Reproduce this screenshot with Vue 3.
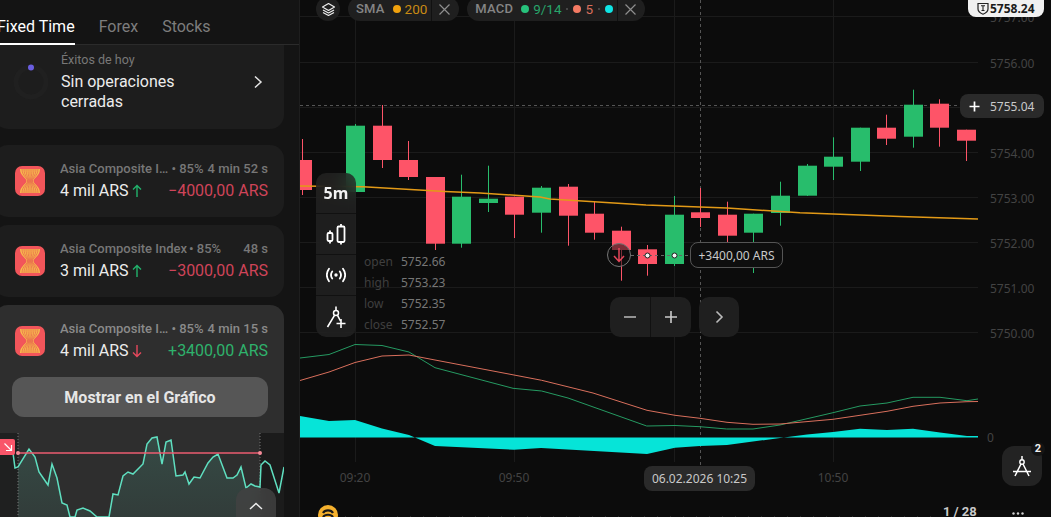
<script setup>
const tabs = ['Fixed Time', 'Forex', 'Stocks']

const trades = [
  { id: 1, amount: '4 mil ARS', dir: 'up', time: '4 min 52 s', result: '−4000,00 ARS', win: false, active: false },
  { id: 2, amount: '3 mil ARS', dir: 'up', time: '48 s', result: '−3000,00 ARS', win: false, active: false },
  { id: 3, amount: '4 mil ARS', dir: 'down', time: '4 min 15 s', result: '+3400,00 ARS', win: true, active: true }
]

const logoCurves = [-8, -6, -4, -2, 0, 2, 4, 6, 8].map((o) => {
  const top = 15 + o
  const mid = 15 + o * 0.3
  return `M${top} 3 C${top} 10 ${mid} 12 ${mid} 15 C${mid} 18 ${top} 20 ${top} 27`
})

// x, wickTop, wickBottom, bodyTop, bodyBottom, green?
const raw = [
  [302.5, 139, 195, 160, 190, 0], [355.5, 124, 192, 125.7, 192, 1], [382.5, 105, 168, 125.7, 160, 0],
  [408.5, 141, 180, 160, 177, 0], [435.5, 177, 250, 177, 243.7, 0], [461.5, 174.7, 247.7, 196.7, 243.7, 1],
  [488.5, 165.7, 212, 198.7, 203, 1], [514.5, 196.7, 238, 196.7, 214.7, 0], [541.5, 186, 232.7, 187.7, 212.7, 1],
  [568.5, 184, 245.7, 186.7, 215.7, 0], [594.5, 201, 239.7, 213.7, 232.7, 0], [621.5, 226.7, 280.7, 230.7, 250, 0],
  [647.5, 245, 275.7, 249.3, 264, 0], [674.5, 196, 266, 214.7, 264, 1], [700.5, 188, 227, 212.3, 218, 0],
  [727.5, 201.7, 245, 214.7, 235.7, 0], [753.5, 213.7, 273, 213.7, 232.7, 1], [780.5, 181.7, 225.7, 195.7, 213, 1],
  [807.5, 164, 196, 165.7, 195.7, 1], [833.5, 137.3, 180, 156.7, 166.7, 1], [860.5, 127.7, 171, 127.7, 161.7, 1],
  [886.5, 114.7, 145, 127.7, 138.7, 0], [913.5, 89.7, 147.7, 104.7, 136.7, 1], [939.5, 99.3, 146.7, 103.7, 127.7, 0],
  [966.5, 129.7, 161, 129.7, 140.7, 0]
]
const candles = raw.map(([x, wt, wb, bt, bb, g]) => ({ x, wt, wb, bt, h: bb - bt, color: g ? '#28bd6c' : '#fe5468' }))

const gridY = [16, 62, 107, 152, 197, 242, 287, 332]
const gridX = [355, 514, 674, 833]
const prices = [
  ['5757.00', 22], ['5756.00', 68], ['5754.00', 158], ['5753.00', 203],
  ['5752.00', 248], ['5751.00', 293], ['5750.00', 338]
]
const times = [['09:20', 355], ['09:50', 514], ['10:50', 833]]

const sma = '300,186 363,186.7 445,191.6 480,193 540,197 550,199 646,205 727,208 800,212.7 900,216.5 978,219'
const macdGreen = '300,358 329,354.5 355,344.5 382,345.5 409,352 435,367.7 513,388.3 541.7,391 568,398 646.7,426 675,425.5 700,426.7 726.7,429 753,429 780,425 833,412.7 860,406 887,403 913,397.3 940,397.3 967,400.7 978,399'
const macdRed = '300,380.5 329,372 355,362.5 382,356 409,355 435,360 514,375 541.7,380.3 593,393 647,410.3 675,415.3 700,418.3 727,422.3 753,424.3 780,424 833,419.3 860,415.3 887,411.3 913,406.3 940,403 967,401.7 978,401.5'
const histogram = '300,416 329,421 355,420 382,428.5 409,435 435,446 514,449.7 541,448 594,451 647,454 675,447.7 700,446 727,445 780,438 807,434.5 833,432 860,428.7 887,430 913,428.7 940,432.5 967,436 978,436 978,437.5 300,437.5'

const ohlc = [['open', '5752.66'], ['high', '5753.23'], ['low', '5752.35'], ['close', '5752.57']]

const spark = '0,452 13,453 15,468 18,467 29,449 35,457 39,472 48,485 52,464 57,478 62,503 67,505 70,517 75,517 77,510 83,508 90,511 97,517 109,517 113,494 118,495 123,476 128,472 133,474 143,464 147,444 152,438 157,437 162,464 166,442 171,440 176,476 183,475 185,472 189,484 194,477 200,478 208,463 213,457 218,454 227,478 233,478 237,475 241,467 246,488 251,484 255,486 260,487 261,465 265,461 270,465 279,493 284,467'
const sparkArea = '18,467 29,449 35,457 39,472 48,485 52,464 57,478 62,503 67,505 70,517 75,517 77,510 83,508 90,511 97,517 109,517 113,494 118,495 123,476 128,472 133,474 143,464 147,444 152,438 157,437 162,464 166,442 171,440 176,476 183,475 185,472 189,484 194,477 200,478 208,463 213,457 218,454 227,478 233,478 237,475 241,467 246,488 251,484 255,486 260,487 260,517 18,517'
</script>

<template>
  <div class="app">
    <aside class="sidebar">
      <nav class="tabs">
        <span v-for="(t, i) in tabs" :key="t" class="tab" :class="{ on: i === 0 }">{{ t }}</span>
      </nav>
      <div class="list">
        <div class="card summary">
          <svg class="ring" width="36" height="36" viewBox="0 0 36 36">
            <circle cx="18" cy="18" r="15" fill="none" stroke="#202020" stroke-width="5" />
            <circle cx="18" cy="3.5" r="3" fill="#6a5ee0" />
          </svg>
          <div class="summary-text">
            <div class="summary-label">Éxitos de hoy</div>
            <div class="summary-value">Sin operaciones<br />cerradas</div>
          </div>
          <svg class="chev" width="10" height="14" viewBox="0 0 10 14">
            <path d="M2 1.5 L8 7 L2 12.5" fill="none" stroke="#e6e6e6" stroke-width="1.5" />
          </svg>
        </div>

        <div v-for="t in trades" :key="t.id" class="card trade" :class="{ active: t.active }">
          <div class="trade-row">
            <svg class="logo" width="30" height="30" viewBox="0 0 30 30">
              <rect width="30" height="30" rx="7" fill="#f2555a" />
              <path d="M5 3 H25 C25 10 18.5 12 18.5 15 C18.5 18 25 20 25 27 H5 C5 20 11.5 18 11.5 15 C11.5 12 5 10 5 3 Z" fill="#f8bd4e" />
              <path v-for="(d, i) in logoCurves" :key="i" :d="d" fill="none" stroke="#e8694c" stroke-width=".8" />
            </svg>
            <div class="trade-body">
              <div class="trade-top">
                <span class="asset">Asia Composite Index</span>
                <span class="pct">• 85%</span>
                <span class="time">{{ t.time }}</span>
              </div>
              <div class="trade-bottom">
                <span class="amount">{{ t.amount }}</span>
                <svg class="dir" width="10" height="14" viewBox="0 0 10 14">
                  <path v-if="t.dir === 'up'" d="M5 13 V2 M1 5.5 L5 1.5 L9 5.5" fill="none" stroke="#22b26c" stroke-width="1.4" />
                  <path v-else d="M5 1 V12 M1 8.5 L5 12.5 L9 8.5" fill="none" stroke="#e5485c" stroke-width="1.4" />
                </svg>
                <span class="result" :class="t.win ? 'win' : 'loss'">{{ t.result }}</span>
              </div>
            </div>
          </div>
          <template v-if="t.active">
            <button class="show-btn">Mostrar en el Gráfico</button>
            <div class="spark">
              <svg width="284" height="84" viewBox="0 433 284 84">
                <defs>
                  <linearGradient id="sparkFill" x1="0" y1="0" x2="0" y2="1">
                    <stop offset="0" stop-color="#5ee0c0" stop-opacity=".16" />
                    <stop offset="1" stop-color="#5ee0c0" stop-opacity=".08" />
                  </linearGradient>
                </defs>
                <rect x="0" y="433" width="18" height="84" fill="#1f2020" />
                <rect x="260" y="433" width="24" height="84" fill="#1b1b1b" />
                <polygon :points="sparkArea" fill="url(#sparkFill)" />
                <path d="M18 433 V517 M260 433 V517" stroke="#777" stroke-width="1" stroke-dasharray="1 2" />
                <polyline :points="spark" fill="none" stroke="#5fdfc0" stroke-width="1.5" />
                <path d="M18 453 H260" stroke="#ec5d70" stroke-width="1.3" />
                <circle cx="18" cy="453" r="2" fill="#f58a98" />
                <circle cx="260" cy="453" r="2" fill="#f58a98" />
              </svg>
              <span class="spark-mark">
                <svg width="10" height="10" viewBox="0 0 10 10">
                  <path d="M1.5 1.5 L8.5 8.5 M8.5 3 V8.5 H3" fill="none" stroke="#fff" stroke-width="1.2" />
                </svg>
              </span>
              <span class="spark-up">
                <svg width="14" height="8" viewBox="0 0 14 8">
                  <path d="M1 7 L7 1.5 L13 7" fill="none" stroke="#eee" stroke-width="1.5" />
                </svg>
              </span>
            </div>
          </template>
        </div>
      </div>
    </aside>

    <main class="chart">
      <svg class="plot" width="751" height="517" viewBox="300 0 751 517">
        <path v-for="y in gridY" :key="'h' + y" :d="`M300 ${y + 0.5} H978`" stroke="#1b1b1b" />
        <path v-for="x in gridX" :key="'v' + x" :d="`M${x + 0.5} 0 V462`" stroke="#1b1b1b" />
        <path d="M300 105.5 H960" stroke="#555" stroke-dasharray="3 3" />
        <path d="M700.5 0 V466" stroke="#555" stroke-dasharray="3 3" />

        <g v-for="c in candles" :key="c.x">
          <path :d="`M${c.x} ${c.wt} V${c.wb}`" :stroke="c.color" stroke-width="1" />
          <rect :x="c.x - 9.5" :y="c.bt" width="19" :height="c.h" :fill="c.color" />
        </g>
        <polyline :points="sma" fill="none" stroke="#e39a17" stroke-width="1.5" />

        <polygon :points="histogram" fill="#06e4d8" />
        <polyline :points="macdGreen" fill="none" stroke="#259a62" stroke-width="1" />
        <polyline :points="macdRed" fill="none" stroke="#d96f5c" stroke-width="1" />

        <path d="M631 255.5 H690" stroke="#666" stroke-dasharray="3 3" />
        <circle cx="647.5" cy="255.5" r="2.5" fill="#f4f4f4" stroke="#222" />
        <circle cx="674.5" cy="255.5" r="2.5" fill="#f4f4f4" stroke="#222" />

        <text v-for="p in prices" :key="p[0]" class="axis" x="990" :y="p[1]">{{ p[0] }}</text>
        <text class="axis" x="987" y="442">0</text>
        <text v-for="t in times" :key="t[0]" class="axis" :x="t[1]" y="482" text-anchor="middle">{{ t[0] }}</text>
        <path d="M345 516.5 H938" stroke="#2a2a2a" stroke-dasharray="1 12" />
      </svg>

      <div class="indicators">
        <span class="layers">
          <svg width="15" height="15" viewBox="0 0 15 15">
            <path d="M7.5 1.5 L13.5 5 L7.5 8.5 L1.5 5 Z M2 8 L7.5 11 L13 8 M2 10.5 L7.5 13.5 L13 10.5" fill="none" stroke="#eee" stroke-width="1.2" stroke-linejoin="round" />
          </svg>
        </span>
        <div class="pill">
          <span class="pill-name">SMA</span>
          <i class="dot orange"></i><span class="val c-orange">200</span>
          <span class="pill-close">
            <svg width="11" height="11" viewBox="0 0 11 11"><path d="M.5 .5 L10.5 10.5 M10.5 .5 L.5 10.5" stroke="#8e8e8e" stroke-width="1.2" /></svg>
          </span>
        </div>
        <div class="pill">
          <span class="pill-name">MACD</span>
          <i class="dot green"></i><span class="val c-green">9/14</span>
          <i class="sep"></i>
          <i class="dot salmon"></i><span class="val c-salmon">5</span>
          <i class="sep"></i>
          <i class="dot cyan"></i>
          <span class="pill-close">
            <svg width="11" height="11" viewBox="0 0 11 11"><path d="M.5 .5 L10.5 10.5 M10.5 .5 L.5 10.5" stroke="#8e8e8e" stroke-width="1.2" /></svg>
          </span>
        </div>
      </div>

      <div class="top-price">
        <svg width="12" height="13" viewBox="0 0 12 13">
          <path d="M1 1.5 H11 V7 C11 9.5 8.5 11.2 6 12.2 C3.5 11.2 1 9.5 1 7 Z" fill="none" stroke="#222" stroke-width="1.2" />
          <path d="M4 3.8 H8 M6 3.8 V8.5 M4.5 8.5 H7.5" fill="none" stroke="#222" stroke-width="1.1" />
        </svg>
        <span>5758.24</span>
      </div>

      <div class="now-price">
        <svg width="11" height="11" viewBox="0 0 11 11"><path d="M5.5 .5 V10.5 M.5 5.5 H10.5" stroke="#fff" stroke-width="1.7" /></svg>
        <span>5755.04</span>
      </div>

      <div class="tools">
        <div class="tool tf">5m</div>
        <div class="tool">
          <svg width="20" height="22" viewBox="0 0 20 22">
            <path d="M4 7.5 V10 M4 18 V20.5 M15 1 V3.5 M15 19 V21.5" stroke="#fff" stroke-width="1.8" />
            <rect x="1.5" y="10" width="5" height="8" rx="1.2" fill="none" stroke="#fff" stroke-width="1.8" />
            <rect x="11.5" y="3.5" width="7" height="15.5" rx="1.2" fill="none" stroke="#fff" stroke-width="1.8" />
          </svg>
        </div>
        <div class="tool">
          <svg width="20" height="16" viewBox="0 0 20 16">
            <circle cx="10" cy="8" r="1.7" fill="#fff" />
            <path d="M6.2 4.5 C4.8 6.5 4.8 9.5 6.2 11.5 M13.8 4.5 C15.2 6.5 15.2 9.5 13.8 11.5 M3 1.8 C.4 5.5 .4 10.5 3 14.2 M17 1.8 C19.6 5.5 19.6 10.5 17 14.2" fill="none" stroke="#fff" stroke-width="1.8" stroke-linecap="round" />
          </svg>
        </div>
        <div class="tool">
          <svg width="20" height="22" viewBox="0 0 20 22">
            <circle cx="10" cy="7" r="2.5" fill="none" stroke="#fff" stroke-width="1.5" />
            <path d="M10 .5 V4.5 M8.5 9.3 L1.5 21 M11.5 9.3 L14.5 15" fill="none" stroke="#fff" stroke-width="1.6" />
            <path d="M15 13 V22 M10.5 17.5 H19.5" stroke="#fff" stroke-width="1.6" />
          </svg>
        </div>
      </div>

      <div class="ohlc">
        <template v-for="r in ohlc" :key="r[0]">
          <span class="o-k">{{ r[0] }}</span>
          <span class="o-v">{{ r[1] }}</span>
        </template>
      </div>

      <span class="trade-marker">
        <svg width="12" height="16" viewBox="0 0 12 16">
          <path d="M6 1 V14 M1 9 L6 14.5 L11 9" fill="none" stroke="#e6465a" stroke-width="1.5" />
        </svg>
      </span>
      <span class="trade-pill">+3400,00 ARS</span>

      <div class="zoom">
        <div class="zoom-group">
          <span class="zoom-btn">
            <svg width="12" height="2" viewBox="0 0 12 2"><path d="M0 1 H12" stroke="#bbb" stroke-width="1.6" /></svg>
          </span>
          <span class="zoom-btn">
            <svg width="12" height="12" viewBox="0 0 12 12"><path d="M0 6 H12 M6 0 V12" stroke="#ccc" stroke-width="1.6" /></svg>
          </span>
        </div>
        <span class="zoom-next">
          <svg width="9" height="14" viewBox="0 0 9 14"><path d="M1.5 1.5 L7 7 L1.5 12.5" fill="none" stroke="#bbb" stroke-width="1.6" /></svg>
        </span>
      </div>

      <span class="date-pill">06.02.2026 10:25</span>

      <div class="draw">
        <svg width="20" height="22" viewBox="0 0 20 22">
          <circle cx="10" cy="7" r="2.2" fill="none" stroke="#fff" stroke-width="1.4" />
          <path d="M10 1 V4.8 M9 9 L3 21 M11 9 L17 21 M1 16.5 H19" fill="none" stroke="#fff" stroke-width="1.5" />
        </svg>
        <b class="badge">2</b>
      </div>

      <span class="brand">
        <svg width="20" height="20" viewBox="0 0 20 20">
          <circle cx="10" cy="10" r="10" fill="#f5b12e" />
          <path d="M5 8 C7 4.5 13 4.5 15 8 M5 12 C7 9 13 9 15 12 M6.5 15.5 C8 14 12 14 13.5 15.5" fill="none" stroke="#1a1a1a" stroke-width="2.2" />
        </svg>
      </span>
      <span class="pages">1 / 28</span>
      <svg class="more" width="12" height="3" viewBox="0 0 12 3">
        <circle cx="1.5" cy="1.5" r="1.2" fill="#d0d0d0" />
        <circle cx="6" cy="1.5" r="1.2" fill="#d0d0d0" />
        <circle cx="10.5" cy="1.5" r="1.2" fill="#d0d0d0" />
      </svg>
    </main>
  </div>
</template>

<style scoped>
.app {
  display: flex;
  width: 1051px;
  height: 517px;
  overflow: hidden;
  background: #0c0c0c;
  font-family: Roboto, "Noto Sans", sans-serif;
}
.sidebar {
  flex: 0 0 299px;
  display: flex;
  flex-direction: column;
  background: #141414;
  border-right: 1px solid #1e1e1e;
  overflow: hidden;
}
.tabs {
  flex: 0 0 45px;
  box-sizing: border-box;
  display: flex;
  gap: 24px;
  align-items: stretch;
  border-bottom: 1px solid #2b2b2b;
  font-size: 16px;
  color: #7d7d7d;
}
.tab {
  padding-top: 17px;
  line-height: 19px;
  margin-bottom: -1px;
}
.tab.on {
  color: #fff;
  border-bottom: 2px solid #fff;
  margin-left: -3px;
  padding-left: 0;
  overflow: visible;
}
.list {
  flex: 1;
  min-height: 0;
  display: flex;
  flex-direction: column;
  gap: 8px;
  margin-left: -6px;
  width: 290px;
  overflow: hidden;
}
.card {
  flex: none;
  background: #1d1d1d;
  border-radius: 14px;
}
.summary {
  margin-top: -15px;
  margin-bottom: 8px;
  height: 99px;
  box-sizing: border-box;
  padding: 0 21px 0 19px;
  display: flex;
  align-items: flex-end;
}
.ring {
  margin-bottom: 29px;
}
.summary-text {
  margin-left: 12px;
  flex: 1;
  padding-bottom: 17px;
}
.summary-label {
  font-size: 12.5px;
  line-height: 15px;
  color: #787878;
  margin-bottom: 5px;
}
.summary-value {
  font-size: 16px;
  line-height: 20px;
  color: #ececec;
}
.chev {
  margin-bottom: 40px;
}
.trade {
  height: 72px;
}
.trade.active {
  height: 230px;
  background: #2e2e2e;
  overflow: hidden;
}
.trade-row {
  display: flex;
  align-items: center;
  padding: 21px 16px 0 21px;
  height: 30px;
}
.logo {
  flex: none;
}
.trade-body {
  flex: 1;
  min-width: 0;
  margin-left: 15px;
}
.trade-top {
  display: flex;
  font-size: 13px;
  line-height: 16px;
  font-weight: 500;
  color: #777;
}
.active .trade-top {
  color: #8a8a8a;
}
.asset {
  flex: 0 1 auto;
  min-width: 0;
  white-space: nowrap;
  overflow: hidden;
  text-overflow: ellipsis;
}
.pct,
.time {
  flex: none;
  white-space: nowrap;
}
.pct {
  margin-left: 2px;
}
.time {
  margin-left: auto;
  padding-left: 4px;
}
.trade-bottom {
  display: flex;
  align-items: center;
  font-size: 16px;
  line-height: 22px;
  margin-top: 3px;
}
.amount {
  color: #ececec;
}
.dir {
  margin-left: 3px;
}
.result {
  margin-left: auto;
}
.loss {
  color: #cf4459;
}
.win {
  color: #2fb26c;
}
.show-btn {
  display: block;
  box-sizing: border-box;
  width: 256px;
  height: 40px;
  margin: 21px 0 16px 18px;
  border: 0;
  border-radius: 12px;
  background: #565656;
  color: #e6e6e6;
  font-family: inherit;
  font-size: 16px;
  font-weight: 700;
}
.spark {
  position: relative;
  margin-left: 6px;
  width: 284px;
  height: 84px;
}
.spark svg {
  display: block;
}
.spark-mark {
  position: absolute;
  left: 0;
  top: 6px;
  width: 15px;
  height: 16px;
  background: #f9566a;
  border-radius: 0 2px 2px 0;
  display: flex;
  align-items: center;
  justify-content: center;
}
.spark-up {
  position: absolute;
  left: 236px;
  top: 55px;
  width: 40px;
  height: 40px;
  border-radius: 12px;
  background: rgba(66, 66, 66, 0.82);
  backdrop-filter: blur(6px);
  display: flex;
  justify-content: center;
  padding-top: 14px;
  box-sizing: border-box;
}
.chart {
  position: relative;
  flex: 1;
  min-width: 0;
}
.plot {
  position: absolute;
  inset: 0;
  display: block;
}
.axis {
  font-family: "Noto Sans", sans-serif;
  font-size: 12px;
  fill: #434343;
}
.indicators {
  position: absolute;
  left: 16px;
  top: -3px;
  display: flex;
  align-items: stretch;
  height: 24px;
  font-size: 13px;
  font-weight: 500;
}
.layers {
  width: 24px;
  border-radius: 50%;
  background: #1f1f1f;
  display: flex;
  align-items: center;
  justify-content: center;
  margin-right: 8px;
}
.pill {
  display: flex;
  align-items: center;
  padding-left: 8px;
  padding-bottom: 1px;
  background: #1f1f1f;
  border-radius: 12px;
  margin-right: 8px;
}
.pill-name {
  color: #858585;
  margin-right: 8px;
  letter-spacing: 0.2px;
}
.val {
  font-weight: 400;
  font-size: 13.5px;
}
.dot {
  width: 8px;
  height: 8px;
  border-radius: 50%;
  margin-right: 4px;
}
.sep {
  width: 2px;
  height: 2px;
  border-radius: 50%;
  background: #555;
  margin: 0 5px;
}
.orange { background: #f0a10d; }
.green { background: #27c27c; }
.salmon { background: #f47a63; }
.cyan { background: #0fe4e4; margin-right: 0; }
.c-orange { color: #c98b14; }
.c-green { color: #28a56b; }
.c-salmon { color: #d96f5c; }
.pill-close {
  align-self: stretch;
  box-sizing: border-box;
  width: 28px;
  margin-left: 4px;
  margin-bottom: -1px;
  padding-right: 2px;
  border-left: 1px solid #111;
  display: flex;
  align-items: center;
  justify-content: center;
}
.top-price {
  position: absolute;
  left: 668px;
  top: 0;
  width: 76px;
  height: 17px;
  box-sizing: border-box;
  padding-left: 9px;
  background: #f1f1f1;
  border-radius: 0 0 8px 8px;
  display: flex;
  align-items: center;
  gap: 1px;
  font-family: "Noto Sans", sans-serif;
  font-size: 12px;
  font-weight: 700;
  color: #1b1b1b;
}
.now-price {
  position: absolute;
  left: 660px;
  top: 94px;
  width: 84px;
  height: 24px;
  box-sizing: border-box;
  padding-left: 9px;
  background: #2a2a2a;
  border-radius: 8px;
  display: flex;
  align-items: center;
  gap: 10px;
  font-family: "Noto Sans", sans-serif;
  font-size: 12px;
  color: #c9c9c9;
}
.tools {
  position: absolute;
  left: 16px;
  top: 173px;
  width: 40px;
  background: rgba(36, 36, 36, 0.78);
  backdrop-filter: blur(8px);
  border-radius: 10px;
  overflow: hidden;
}
.tool {
  height: 41px;
  box-sizing: border-box;
  display: flex;
  align-items: center;
  justify-content: center;
  border-bottom: 1px solid #111;
}
.tool:last-child {
  border-bottom: 0;
}
.tf {
  font-family: "Noto Sans", sans-serif;
  font-size: 16px;
  font-weight: 700;
  color: #f2f2f2;
}
.ohlc {
  position: absolute;
  left: 64px;
  top: 251px;
  display: grid;
  grid-template-columns: 37px auto;
  grid-auto-rows: 21px;
  align-items: center;
  font-family: "Noto Sans", sans-serif;
  font-size: 12px;
}
.o-k { color: #3f3f3f; }
.o-v { color: #767676; }
.trade-marker {
  position: absolute;
  left: 307px;
  top: 243px;
  width: 24px;
  height: 24px;
  box-sizing: border-box;
  border: 1px solid #767676;
  border-radius: 50%;
  background: rgba(14, 14, 14, 0.55);
  display: flex;
  align-items: center;
  justify-content: center;
}
.trade-pill {
  position: absolute;
  left: 390px;
  top: 242px;
  width: 93px;
  height: 26px;
  box-sizing: border-box;
  border: 1px solid #555;
  border-radius: 8px;
  background: #0e0e0e;
  display: flex;
  align-items: center;
  justify-content: center;
  font-family: "Noto Sans", sans-serif;
  font-size: 12px;
  color: #c9c9c9;
  white-space: nowrap;
}
.zoom {
  position: absolute;
  left: 310px;
  top: 297px;
  display: flex;
  gap: 8px;
}
.zoom-group {
  display: flex;
  border-radius: 10px;
  overflow: hidden;
  background: #1f1f1f;
}
.zoom-btn {
  width: 40px;
  height: 40px;
  display: flex;
  align-items: center;
  justify-content: center;
}
.zoom-btn + .zoom-btn {
  border-left: 1px solid #111;
}
.zoom-next {
  width: 40px;
  height: 40px;
  border-radius: 10px;
  background: #1f1f1f;
  display: flex;
  align-items: center;
  justify-content: center;
}
.date-pill {
  position: absolute;
  left: 344px;
  top: 466px;
  width: 111px;
  height: 25px;
  background: #2a2a2a;
  border-radius: 8px;
  display: flex;
  align-items: center;
  justify-content: center;
  font-family: "Noto Sans", sans-serif;
  font-size: 12px;
  color: #c9c9c9;
  white-space: nowrap;
}
.draw {
  position: absolute;
  left: 702px;
  top: 446px;
  width: 40px;
  height: 40px;
  border-radius: 12px;
  background: #232323;
  display: flex;
  align-items: center;
  justify-content: center;
}
.badge {
  position: absolute;
  right: -3px;
  top: -4px;
  width: 14px;
  height: 14px;
  border-radius: 50%;
  background: #141414;
  color: #eee;
  font-size: 11px;
  line-height: 14px;
  text-align: center;
}
.brand {
  position: absolute;
  left: 18px;
  top: 505px;
  display: block;
  line-height: 0;
}
.pages {
  position: absolute;
  left: 643px;
  top: 504px;
  font-size: 13px;
  line-height: 16px;
  font-weight: 700;
  color: #c9c9c9;
  white-space: nowrap;
}
.more {
  position: absolute;
  left: 712px;
  top: 512px;
  display: block;
}
</style>
